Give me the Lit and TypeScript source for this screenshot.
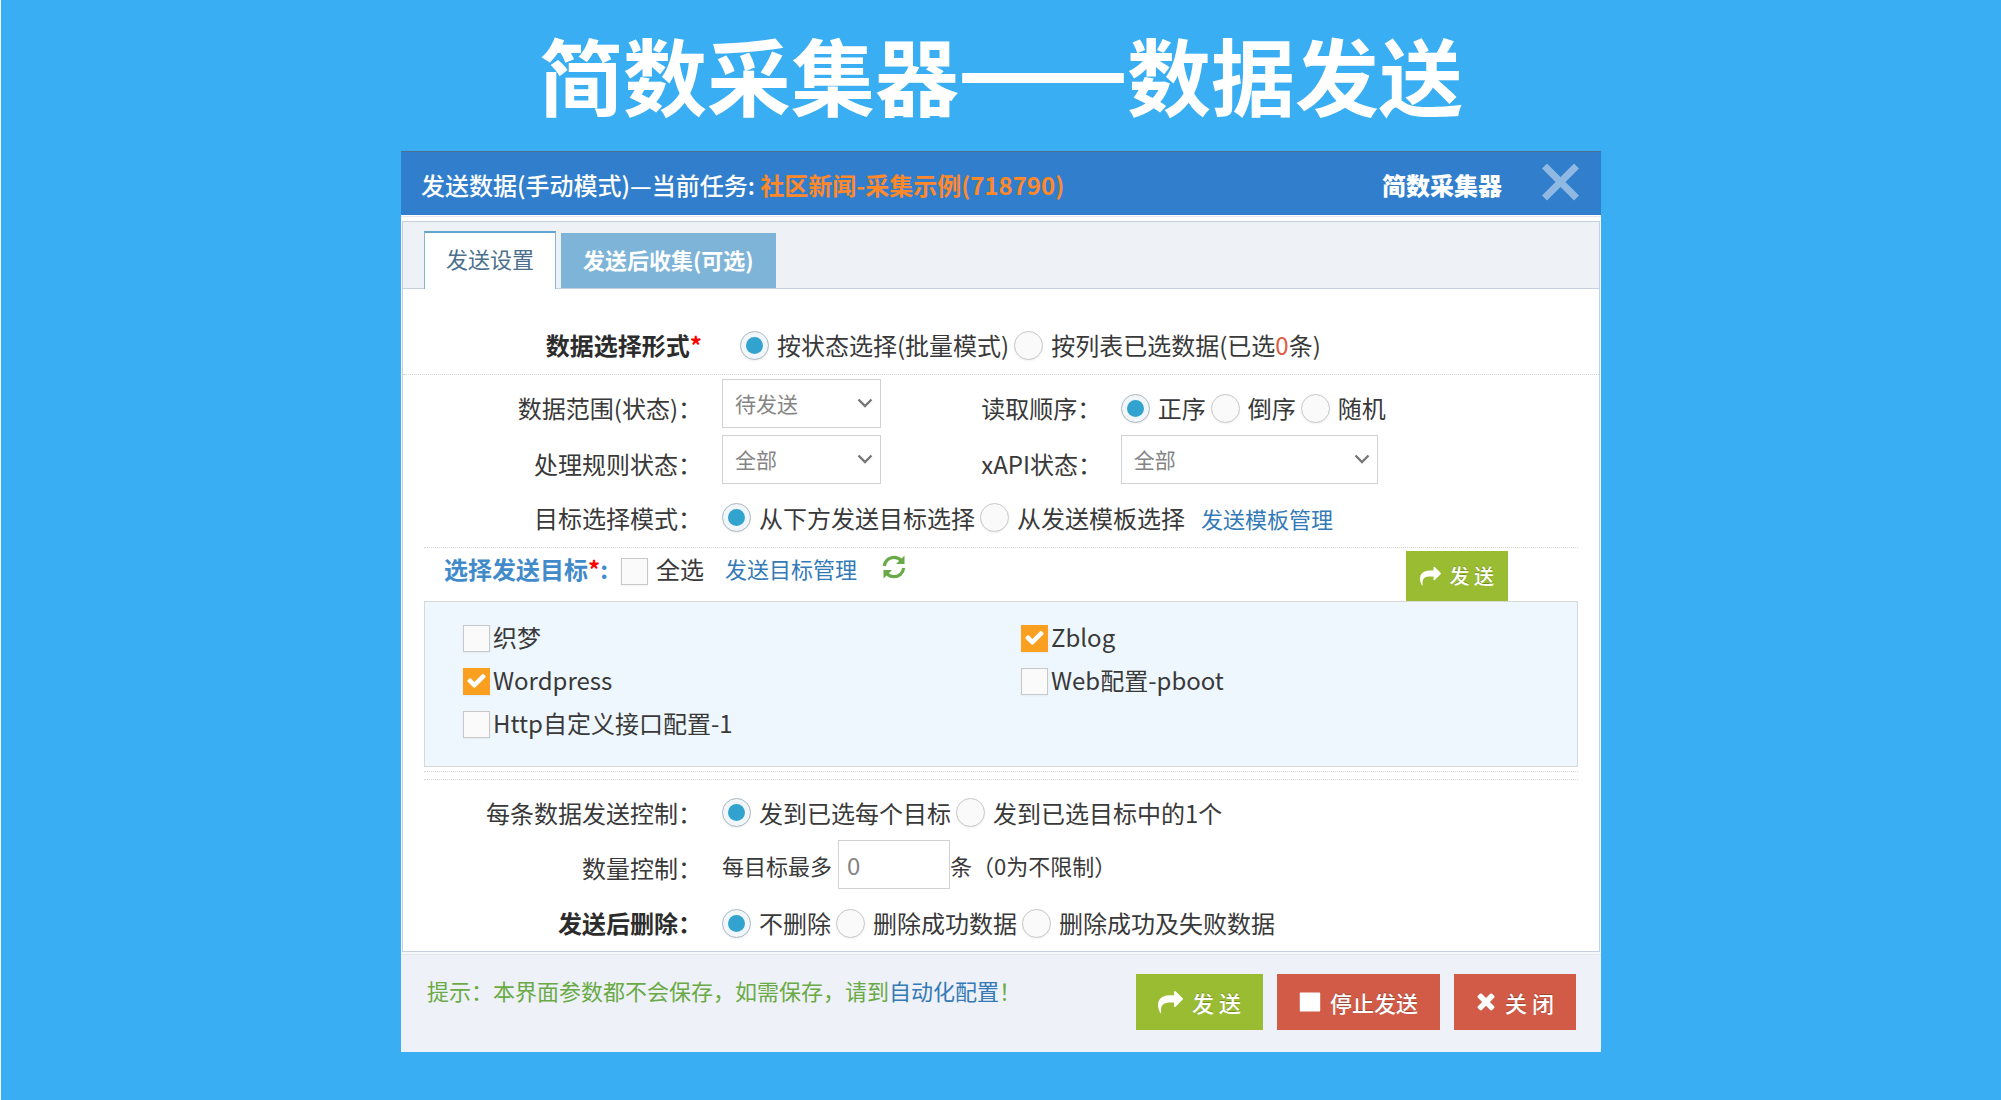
import { LitElement, html, css, svg, nothing } from "lit";
import { customElement, property } from "lit/decorators.js";

const ICONS = {
  share: {
    box: "0 0 1792 1792",
    path: "M1792 640q0 26-19 45l-512 512q-19 19-45 19t-45-19-19-45v-256h-224q-98 0-175.5 6t-154 21.5-133 42.5-105.5 69.5-80 101-48.5 138.5-17.5 181q0 55 5 123 0 6 2.5 23.5t2.5 26.5q0 15-8.5 25t-23.5 10q-16 0-28-17-7-9-13-22t-13.5-30-10.5-24q-127-285-127-451 0-199 53-333 162-403 875-403h224v-256q0-26 19-45t45-19 45 19l512 512q19 19 19 45z",
  },
  times: {
    box: "197 263 1398 1398",
    path: "M1490 1322q0 40-28 68l-136 136q-28 28-68 28t-68-28l-294-294-294 294q-28 28-68 28t-68-28l-136-136q-28-28-28-68t28-68l294-294-294-294q-28-28-28-68t28-68l136-136q28-28 68-28t68 28l294 294 294-294q28-28 68-28t68 28l136 136q28 28 28 68t-28 68l-294 294 294 294q28 28 28 68z",
  },
  stop: {
    box: "0 0 1792 1792",
    path: "M1728 192v1408q0 26-19 45t-45 19h-1536q-26 0-45-19t-19-45v-1408q0-26 19-45t45-19h1536q26 0 45 19t19 45z",
  },
  check: {
    box: "0 0 1792 1792",
    path: "M1671 566q0 40-28 68l-724 724-136 136q-28 28-68 28t-68-28l-136-136-362-362q-28-28-28-68t28-68l136-136q28-28 68-28t68 28l294 295 656-657q28-28 68-28t68 28l136 136q28 28 28 68z",
  },
};

const icon = (name: keyof typeof ICONS, cls = "icon") =>
  html`<svg class="${cls} ${name}" viewBox=${ICONS[name].box} aria-hidden="true">${svg`<path fill="currentColor" d=${ICONS[name].path}></path>`}</svg>`;

const font = css`
  :host {
    font-family: "Noto Sans CJK SC", "Noto Sans", sans-serif;
    font-size: 24px;
    line-height: 36px;
    color: #393939;
  }
`;

@customElement("radio-set")
class RadioSet extends LitElement {
  @property() name = "";
  @property({ attribute: false }) options: unknown[] = [];

  static styles = [
    font,
    css`
      :host {
        display: flex;
        flex-wrap: wrap;
        gap: 5px;
      }
      .option {
        display: flex;
        align-items: center;
        gap: 8px;
        white-space: nowrap;
      }
      .radio {
        appearance: none;
        flex: none;
        display: grid;
        place-items: center;
        box-sizing: border-box;
        width: 29px;
        height: 29px;
        margin: 0;
        border: 1px solid #c8c8c8;
        border-radius: 50%;
        background: #fafafa;
        box-shadow: 0 1px 2px rgba(0, 0, 0, 0.06);
      }
      .radio:checked {
        border-color: #adb8c0;
        background: #f1f6fb;
      }
      .radio:checked::before {
        content: "";
        width: 17px;
        height: 17px;
        border-radius: 50%;
        background: #32a3ce;
      }
      .count {
        color: #dd5a43;
      }
    `,
  ];

  render() {
    return this.options.map(
      (text, i) => html`<label class="option">
        <input class="radio" type="radio" name=${this.name} ?checked=${i === 0} />
        <span>${text}</span>
      </label>`
    );
  }
}

@customElement("check-item")
class CheckItem extends LitElement {
  @property() text = "";
  @property({ type: Boolean }) checked = false;
  @property({ type: Boolean }) spaced = false;

  static styles = [
    font,
    css`
      :host {
        display: block;
      }
      .item {
        display: flex;
        align-items: center;
        gap: 3px;
        white-space: nowrap;
      }
      .spaced {
        gap: 8px;
      }
      .mark {
        display: grid;
        place-items: center;
        padding-top: 4px;
      }
      .box {
        appearance: none;
        grid-area: 1 / 1;
        box-sizing: border-box;
        width: 27px;
        height: 27px;
        margin: 0;
        border: 1px solid #c8c8c8;
        background: #fafafa;
        box-shadow: 0 1px 2px rgba(0, 0, 0, 0.05);
      }
      .box:checked {
        border-color: #ff9f20;
        background: #f9a021;
      }
      .tick {
        grid-area: 1 / 1;
        width: 21px;
        height: 21px;
        margin-bottom: 3px;
        color: #fff;
        pointer-events: none;
      }
    `,
  ];

  render() {
    return html`<label class=${this.spaced ? "item spaced" : "item"}>
      <span class="mark">
        <input class="box" type="checkbox" ?checked=${this.checked} />
        ${this.checked ? icon("check", "tick") : nothing}
      </span>
      <span>${this.text}</span>
    </label>`;
  }
}

@customElement("app-root")
class AppRoot extends LitElement {
  static styles = [
    font,
    css`
      :host {
        display: block;
        box-sizing: border-box;
        min-height: 100vh;
        padding-bottom: 48px;
        border-left: 1px solid #fff;
        background: #39aef2;
      }
      a {
        color: #337ab7;
        font-size: 22px;
        text-decoration: none;
      }
      .title {
        margin: 0;
        padding: 14px 0 17px;
        color: #fff;
        font-size: 84px;
        font-weight: 700;
        line-height: 120px;
        text-align: center;
      }
      .dash {
        -webkit-text-stroke: 6px #fff;
      }
      .dialog {
        width: 60%;
        min-width: 1200px;
        margin: 0 auto;
        background: #fff;
      }
      .header {
        display: flex;
        align-items: center;
        box-sizing: border-box;
        min-height: 64px;
        padding: 2px 20px 0;
        border-top: 1px solid #4f6f92;
        background: #307ecc;
        color: #fff;
      }
      .heading {
        flex: 1;
        margin: 0;
        font-size: 24px;
        font-weight: 500;
      }
      .task {
        color: #ff892a;
        font-weight: 700;
      }
      .brand {
        font-weight: 900;
      }
      .close {
        display: flex;
        margin: 0 0 4px 39px;
        padding: 0;
        border: 0;
        background: none;
        color: #8fb9e3;
      }
      .close-icon {
        width: 40px;
        height: 38px;
      }
      .rule {
        height: 1px;
        margin: 1px 0 4px;
        background: #e8e8ea;
      }
      .rule-bottom {
        height: 2px;
        border-bottom: 1px solid #e3e8ea;
        background: #f4f7fb;
      }
      .content {
        margin: 0 1px;
        border: 1px solid #c5d0dc;
      }
      .tabs {
        display: flex;
        align-items: flex-end;
        gap: 5px;
        padding: 9px 21px 0;
        border-bottom: 1px solid #c5d0dc;
        background: #eef1f6;
      }
      .tab {
        box-sizing: border-box;
        padding: 0 22px 4px;
        height: 55px;
        border: 0;
        background: #7db4d8;
        color: #fff;
        font: inherit;
        font-size: 22px;
        font-weight: 700;
      }
      .tab.active {
        height: 58px;
        margin-bottom: -1px;
        padding: 0 21px 6px;
        border: 1px solid #86b7d9;
        border-top: 2px solid #5fa5cf;
        border-bottom: 0;
        background: #fff;
        color: #4c708c;
        font-weight: 400;
      }
      .row {
        display: grid;
        grid-template-columns: 25% 20% 10% 1fr;
        column-gap: 20px;
        align-items: center;
        min-height: 56px;
      }
      .row.first {
        column-gap: 38px;
        padding: 28px 0 1px;
        border-bottom: 1px dotted #d4d4d4;
      }
      .row.mode {
        min-height: 59px;
        padding-top: 1px;
      }
      .row.each,
      .row.limit {
        min-height: 55px;
      }
      .label {
        text-align: right;
        white-space: nowrap;
      }
      .strong {
        color: #2c2c2c;
        font-weight: 700;
      }
      .low {
        padding-top: 10px;
      }
      .span {
        grid-column: 2 / -1;
      }
      .inline {
        display: flex;
        align-items: center;
        gap: 16px;
      }
      .required {
        color: #f00;
      }
      .pick {
        display: grid;
        align-items: center;
      }
      .select {
        appearance: none;
        grid-area: 1 / 1;
        box-sizing: border-box;
        width: 159px;
        height: 49px;
        padding: 0 12px;
        border: 1px solid #d2d2d2;
        border-radius: 0;
        background: #fff;
        color: #858585;
        font: inherit;
        font-size: 21px;
      }
      .select.wide {
        width: 257px;
      }
      .chevron {
        grid-area: 1 / 1;
        width: 16px;
        height: 10px;
        margin-left: 135px;
        pointer-events: none;
      }
      .wide + .chevron {
        margin-left: 233px;
      }
      .targets {
        margin: 0 21px;
        border-top: 1px dotted #d4d4d4;
        border-bottom: 1px dotted #d4d4d4;
      }
      .bar {
        display: flex;
        align-items: flex-start;
        min-height: 50px;
        padding: 3px 70px 0 20px;
      }
      .pick-title {
        margin: 0 13px 0 0;
        color: #428bca;
        font-size: 24px;
        font-weight: 700;
        white-space: nowrap;
      }
      .manage {
        margin: 0 25px 0 21px;
        line-height: 34px;
      }
      .refresh {
        display: flex;
        margin: 4px auto 0 0;
        padding: 0;
        border: 0;
        background: none;
        color: #69aa46;
      }
      .refresh-icon {
        width: 24px;
        height: 24px;
      }
      .panel {
        display: grid;
        grid-template-columns: 1fr 1fr;
        grid-auto-rows: 43px;
        align-items: center;
        box-sizing: border-box;
        min-height: 166px;
        margin-bottom: 4px;
        padding: 13px 38px;
        column-gap: 40px;
        border: 1px solid #d5d9da;
        background: #eff7fe;
      }
      .gap {
        height: 7px;
        margin: 0 21px 5px;
        border-bottom: 1px dotted #d4d4d4;
      }
      .small {
        display: flex;
        align-items: center;
        margin-bottom: 6px;
        font-size: 22px;
        white-space: nowrap;
      }
      .number {
        box-sizing: border-box;
        width: 112px;
        height: 49px;
        margin-left: 6px;
        padding: 0 8px;
        border: 1px solid #d2d2d2;
        background: #fff;
        color: #858585;
        font: inherit;
        font-size: 24px;
      }
      .btn {
        display: flex;
        align-items: center;
        justify-content: center;
        gap: 9px;
        height: 56px;
        padding: 0 22px;
        border: 0;
        background: #9abc32;
        color: #fff;
        font: inherit;
        font-size: 22px;
        font-weight: 500;
        white-space: nowrap;
        text-shadow: 0 -1px 0 rgba(0, 0, 0, 0.25);
      }
      .btn.compact {
        height: 50px;
        padding: 0 14px;
        font-size: 20px;
      }
      .btn.danger {
        background: #d15b47;
      }
      .icon {
        width: 25px;
        height: 25px;
      }
      .icon.stop {
        width: 22px;
        height: 22px;
      }
      .icon.times {
        width: 20px;
        height: 20px;
      }
      .compact .icon {
        width: 21px;
        height: 21px;
      }
      .footer {
        display: flex;
        align-items: flex-start;
        gap: 14px;
        padding: 19px 25px 22px 26px;
        background: #eef1f7;
      }
      .hint {
        flex: 1;
        margin: 0;
        color: #69aa46;
        font-size: 22px;
        line-height: 32px;
      }
    `,
  ];

  private chevron = html`<svg class="chevron" viewBox="0 0 16 10" aria-hidden="true">
    <path d="M1.500 1.500 8 8l6.500-6.500" fill="none" stroke="#777" stroke-width="2.400"></path>
  </svg>`;

  render() {
    return html`
      <h1 class="title" lang="zh-CN">简数采集器<span class="dash">——</span>数据发送</h1>
      <section class="dialog">
        <header class="header">
          <h2 class="heading">
            发送数据(手动模式)—当前任务: <span class="task">社区新闻-采集示例(718790)</span>
          </h2>
          <span class="brand">简数采集器</span>
          <button class="close" type="button" aria-label="关闭">
            <svg class="close-icon" viewBox="0 0 40 38" aria-hidden="true">
              <path d="M3.500 2 35.500 34M35.500 2 3.500 34" fill="none" stroke="currentColor" stroke-width="7"></path>
            </svg>
          </button>
        </header>
        <div class="rule"></div>
        <div class="content">
          <nav class="tabs">
            <button class="tab active" type="button">发送设置</button>
            <button class="tab" type="button">发送后收集(可选)</button>
          </nav>

          <div class="row first">
            <div class="label strong">数据选择形式<span class="required">*</span></div>
            <radio-set
              class="span"
              name="form"
              .options=${["按状态选择(批量模式)", html`按列表已选数据(已选<span class="count">0</span>条)`]}
            ></radio-set>
          </div>

          <div class="row">
            <label class="label low" for="range">数据范围(状态)：</label>
            <div class="pick">
              <select class="select" id="range"><option>待发送</option></select>${this.chevron}
            </div>
            <div class="label low">读取顺序：</div>
            <radio-set class="low" name="order" .options=${["正序", "倒序", "随机"]}></radio-set>
          </div>
          <div class="row">
            <label class="label low" for="rule">处理规则状态：</label>
            <div class="pick">
              <select class="select" id="rule"><option>全部</option></select>${this.chevron}
            </div>
            <label class="label low" for="xapi">xAPI状态：</label>
            <div class="pick">
              <select class="select wide" id="xapi"><option>全部</option></select>${this.chevron}
            </div>
          </div>
          <div class="row mode">
            <div class="label">目标选择模式：</div>
            <div class="span inline">
              <radio-set name="mode" .options=${["从下方发送目标选择", "从发送模板选择"]}></radio-set>
              <a href="#templates">发送模板管理</a>
            </div>
          </div>

          <div class="targets">
            <div class="bar">
              <h3 class="pick-title">选择发送目标<span class="required">*</span>:</h3>
              <check-item spaced text="全选"></check-item>
              <a class="manage" href="#targets">发送目标管理</a>
              <button class="refresh" type="button" aria-label="刷新">
                <svg class="refresh-icon" viewBox="0 0 24 24" aria-hidden="true">
                  <path
                    d="M2.300 11C3 5.500 7.500 2.300 12 2.300c3 0 5.500 1.200 7.200 3M21.700 13c-.7 5.500-5.200 8.700-9.700 8.700-3 0-5.500-1.200-7.200-3"
                    fill="none"
                    stroke="currentColor"
                    stroke-width="3.200"
                  ></path>
                  <path d="M22.500 .5v8.500h-8.500zM1.500 23.500v-8.500h8.500z" fill="currentColor"></path>
                </svg>
              </button>
              <button class="btn compact" type="button">${icon("share")}<span>发 送</span></button>
            </div>
            <div class="panel">
              <check-item text="织梦"></check-item>
              <check-item text="Zblog" checked></check-item>
              <check-item text="Wordpress" checked></check-item>
              <check-item text="Web配置-pboot"></check-item>
              <check-item text="Http自定义接口配置-1"></check-item>
            </div>
          </div>
          <div class="gap"></div>

          <div class="row each">
            <div class="label">每条数据发送控制：</div>
            <radio-set class="span" name="each" .options=${["发到已选每个目标", "发到已选目标中的1个"]}></radio-set>
          </div>
          <div class="row limit">
            <label class="label" for="max">数量控制：</label>
            <div class="span small">
              每目标最多<input class="number" id="max" type="text" value="0" />条（0为不限制）
            </div>
          </div>
          <div class="row">
            <div class="label strong">发送后删除：</div>
            <radio-set
              class="span"
              name="after"
              .options=${["不删除", "删除成功数据", "删除成功及失败数据"]}
            ></radio-set>
          </div>
        </div>
        <div class="rule-bottom"></div>
        <footer class="footer">
          <p class="hint">
            提示：本界面参数都不会保存，如需保存，请到<a href="#auto">自动化配置</a>！
          </p>
          <button class="btn" type="button">${icon("share")}<span>发 送</span></button>
          <button class="btn danger" type="button">${icon("stop")}<span>停止发送</span></button>
          <button class="btn danger" type="button">${icon("times")}<span>关 闭</span></button>
        </footer>
      </section>
    `;
  }
}
